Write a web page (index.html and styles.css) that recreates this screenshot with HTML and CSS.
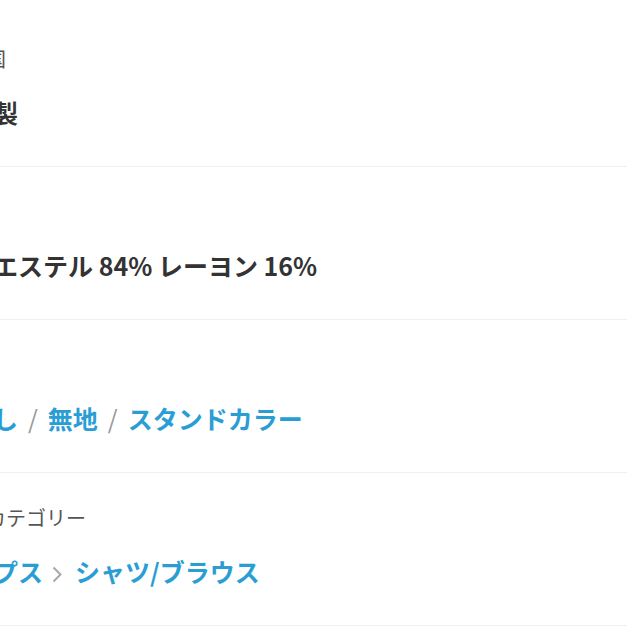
FILE: index.html
```html
<!DOCTYPE html>
<html lang="ja">
<head>
    <meta charset="UTF-8">
    <meta name="viewport" content="width=device-width, initial-scale=1.0">
    <title>商品の情報</title>
    <link rel="stylesheet" href="styles.css">
</head>
<body>

<div class="details">
    <!-- 原産国 -->
    <div class="row">
        <div class="label">原産国</div>
        <div class="value">中国製</div>
    </div>

    <!-- 素材 -->
    <div class="row">
        <div class="label">素材</div>
        <div class="value">ポリエステル 84% レーヨン 16%</div>
    </div>

    <!-- 特徴 -->
    <div class="row">
        <div class="label">特徴</div>
        <div class="value">
            <a href="#" class="link">袖なし</a><span class="slash">/</span><a href="#" class="link">無地</a><span class="slash">/</span><a href="#" class="link">スタンドカラー</a>
        </div>
    </div>

    <!-- カテゴリー -->
    <div class="row">
        <div class="label">商品カテゴリー</div>
        <div class="value">
            <a href="#" class="link">トップス</a><svg class="chevron" width="10" height="17" viewBox="0 0 10 17"><path d="M1.5 1.5 L8.5 8.5 L1.5 15.5" fill="none" stroke="#a8a8a8" stroke-width="2"/></svg><a href="#" class="link">シャツ/ブラウス</a>
        </div>
    </div>
</div>

</body>
</html>
```

FILE: styles.css
```css
body {
    font-family: "Noto Sans CJK JP", "Noto Sans", sans-serif;
    margin: 0;
    padding: 14px 0 0 0;
    background-color: #fff;
    color: #333;
    overflow: hidden;
}

.details {
    margin-left: -57px;
}

.row {
    padding: 32px 0 38px 0;
    border-bottom: 1px solid #efefef;
}

.label {
    margin-left: 3px;
    font-size: 20px;
    line-height: 26px;
    color: #555;
}

.value {
    margin-top: 24px;
    font-size: 25px;
    line-height: 32px;
    font-weight: bold;
    color: #333;
}

.link {
    color: #2a9ed4;
    text-decoration: none;
}

.slash {
    color: #999;
    font-weight: normal;
    margin: 0 10px;
}

.chevron {
    margin: 0 13px 0 9px;
    vertical-align: -1px;
}
```
